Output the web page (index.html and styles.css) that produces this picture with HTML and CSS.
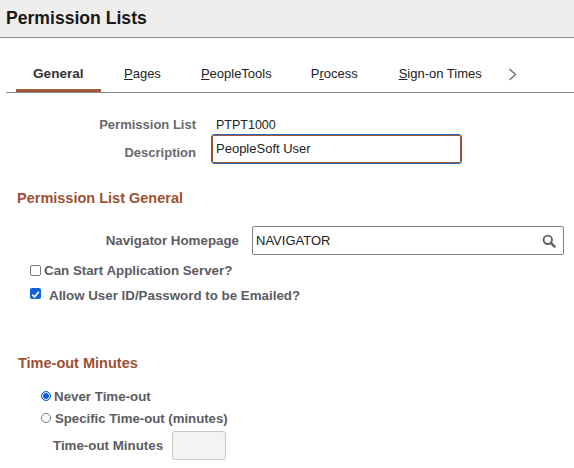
FILE: index.html
```html
<!DOCTYPE html>
<html lang="en">
<head>
<meta charset="UTF-8">
<title>Permission Lists</title>
<link rel="stylesheet" href="styles.css">
</head>
<body>

  <header class="title-bar">
    <h1>Permission Lists</h1>
  </header>

  <nav class="tabs">
    <a class="tab active">General</a>
    <a class="tab tab-pages"><u>P</u>ages</a>
    <a class="tab tab-tools"><u>P</u>eopleTools</a>
    <a class="tab tab-process">P<u>r</u>ocess</a>
    <a class="tab tab-signon"><u>S</u>ign-on Times</a>
    <svg class="chevron" width="9" height="13" viewBox="0 0 9 13">
      <path d="M1.5 1 L7.5 6.5 L1.5 12" fill="none" stroke="#6b6b6b" stroke-width="1.3"/>
    </svg>
  </nav>

  <section class="summary">
    <div class="row row-list">
      <span class="label">Permission List</span>
      <span class="value">PTPT1000</span>
    </div>
    <div class="row row-desc">
      <span class="label">Description</span>
      <div class="desc-input">PeopleSoft User</div>
    </div>
  </section>

  <h2 class="section-head head-general">Permission List General</h2>

  <div class="row row-nav">
    <span class="label">Navigator Homepage</span>
    <div class="lookup">
      <span>NAVIGATOR</span>
      <svg width="14" height="14" viewBox="0 0 14 14">
        <circle cx="5.8" cy="5.8" r="4.2" fill="none" stroke="#5e5e5e" stroke-width="1.9"/>
        <path d="M8.9 8.9 L12.6 12.6" stroke="#5e5e5e" stroke-width="2.4" stroke-linecap="round"/>
      </svg>
    </div>
  </div>

  <div class="check-row check-start">
    <span class="checkbox"></span>
    <span class="field-text">Can Start Application Server?</span>
  </div>
  <div class="check-row check-email">
    <span class="checkbox checked">
      <svg width="11" height="11" viewBox="0 0 11 11">
        <path d="M2.2 5.6 L4.5 8 L8.8 2.8" fill="none" stroke="#fff" stroke-width="1.8"/>
      </svg>
    </span>
    <span class="field-text">Allow User ID/Password to be Emailed?</span>
  </div>

  <h2 class="section-head head-timeout">Time-out Minutes</h2>

  <div class="radio-row radio-never">
    <span class="radio selected"></span>
    <span class="field-text">Never Time-out</span>
  </div>
  <div class="radio-row radio-specific">
    <span class="radio"></span>
    <span class="field-text">Specific Time-out (minutes)</span>
  </div>
  <div class="row row-minutes">
    <span class="field-text">Time-out Minutes</span>
    <div class="disabled-input"></div>
  </div>

</body>
</html>
```

FILE: styles.css
```css
html, body
{
  margin : 0;
  padding : 0;
  height : 468px;
  overflow : hidden;
}

body
{
  font-family : "Liberation Sans", Arial, sans-serif;
  font-size : 13px;
  background : #fff;
  color : #000;
}

.title-bar
{
  height : 37px;
  background : #efeeed;
  border-bottom : 1px solid #8a8886;
}

h1
{
  margin : 0;
  padding : 9px 0 0 6px;
  font-size : 17.6px;
  line-height : 19px;
  font-weight : bold;
  color : #1a1a1a;
}

.tabs
{
  display : flex;
  align-items : flex-start;
  height : 54px;
  margin-left : 6px;
  border-bottom : 1px solid #8a8886;
}

.tab
{
  margin-top : 28px;
  line-height : 16px;
  color : #222;
  white-space : nowrap;
}

.tab.active
{
  width : 85px;
  height : 26px;
  margin-left : 10px;
  padding-left : 17px;
  box-sizing : border-box;
  border-bottom : 3px solid #a0583a;
  font-size : 13.6px;
  font-weight : bold;
  color : #333;
}

.tab-pages { margin-left : 23px; }
.tab-tools { margin-left : 40px; }
.tab-process { margin-left : 39px; }
.tab-signon { margin-left : 41px; }

.chevron
{
  margin : 30px 0 0 26px;
}

.row
{
  display : flex;
  align-items : center;
}

.label
{
  width : 196px;
  text-align : right;
  font-weight : bold;
  color : #68686e;
}

.row-list
{
  margin-top : 23px;
  height : 17px;
}

.value
{
  margin-left : 20px;
  padding-top : 1px;
  font-size : 12.5px;
  color : #222;
}

.row-desc
{
  margin-top : 1px;
  height : 30px;
}

.row-desc .label
{
  padding-top : 6px;
}

.desc-input
{
  width : 251px;
  height : 30px;
  margin-left : 15px;
  padding-left : 4px;
  box-sizing : border-box;
  border : 1px solid #2a66c0;
  border-radius : 3px;
  box-shadow : inset 0 0 0 1px #a0583a;
  line-height : 27px;
  color : #222;
}

.section-head
{
  margin : 0;
  font-size : 14.5px;
  line-height : 16px;
  font-weight : bold;
  color : #9c5232;
}

.head-general
{
  margin : 26px 0 0 17px;
}

.head-timeout
{
  margin : 52px 0 0 18px;
}

.row-nav
{
  margin-top : 20px;
  height : 29px;
}

.row-nav .label
{
  width : 239px;
  font-size : 13.33px;
  color : #5c5c62;
}

.lookup
{
  display : flex;
  align-items : center;
  justify-content : space-between;
  width : 312px;
  height : 29px;
  margin-left : 13px;
  padding : 0 7px 0 3px;
  box-sizing : border-box;
  border : 1px solid #85807a;
  border-radius : 2px;
  color : #222;
}

.field-text
{
  font-size : 13.33px;
  font-weight : bold;
  color : #5c5c62;
  white-space : nowrap;
}

.radio-specific .field-text
{
  font-size : 13.2px;
}

.check-row,
.radio-row
{
  display : flex;
  align-items : center;
}

.check-start
{
  margin : 7px 0 0 30px;
  height : 16px;
}

.check-email
{
  margin : 9px 0 0 30px;
  height : 16px;
}

.checkbox
{
  flex : none;
  width : 9px;
  height : 9px;
  margin-right : 3px;
  border : 1px solid #7a7a80;
  border-radius : 2px;
}

.checkbox.checked
{
  position : relative;
  top : -2px;
  width : 11px;
  height : 11px;
  margin-right : 8px;
  border : 0;
  background : #0f5fdc;
}

.radio-never
{
  margin : 17px 0 0 41px;
  height : 16px;
}

.radio-specific
{
  margin : 6px 0 0 41px;
  height : 16px;
}

.radio
{
  flex : none;
  width : 8px;
  height : 8px;
  margin-right : 4px;
  border : 1px solid #7a7a80;
  border-radius : 50%;
}

.radio.selected
{
  margin-right : 3px;
  border-color : #0f5fdc;
  background : #0f5fdc;
  box-shadow : inset 0 0 0 1px #fff;
}

.row-minutes
{
  margin : 5px 0 0 53px;
  height : 29px;
}

.disabled-input
{
  width : 54px;
  height : 29px;
  margin-left : 9px;
  box-sizing : border-box;
  background : #f4f3f2;
  border : 1px solid #c8c6c4;
  border-radius : 3px;
}
```
